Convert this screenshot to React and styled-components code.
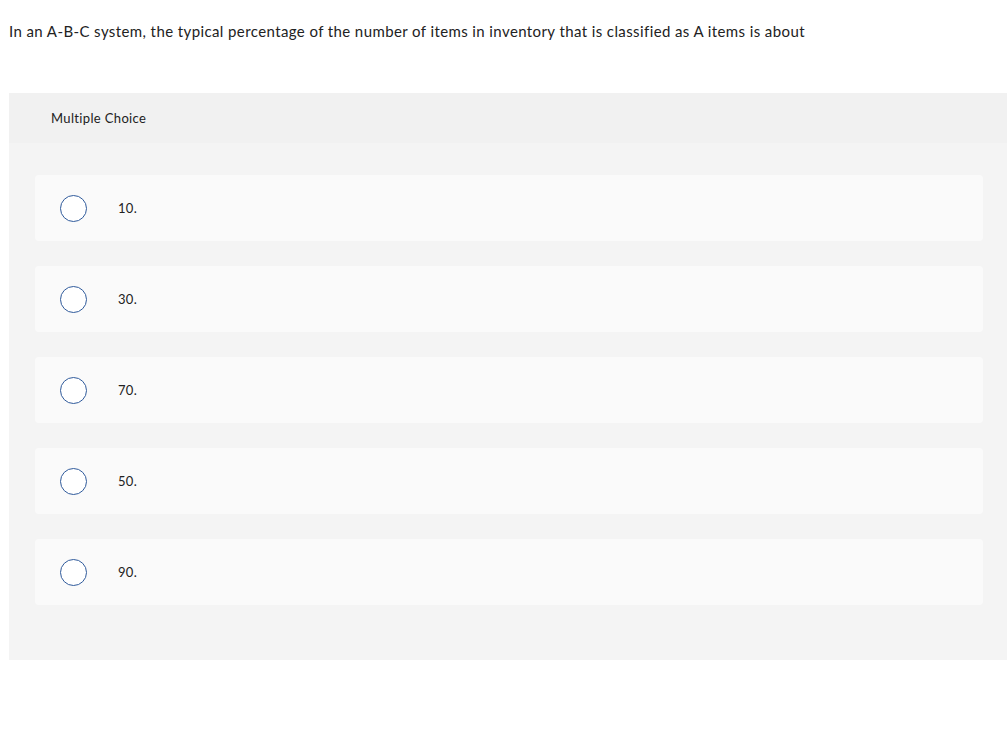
import React from "react";
import styled, { createGlobalStyle } from "styled-components";

const Global = createGlobalStyle`
  html, body { margin: 0; padding: 0; background: #fff; overflow: hidden; }
  body { font-family: "Lato", "Liberation Sans", sans-serif; color: #333; }
`;

const Page = styled.div`
  padding: 21px 0 0 9px;
`;

const Question = styled.p`
  margin: 0;
  font-size: 15px;
  letter-spacing: 0.4px;
  line-height: 20px;
  color: #222;
`;

const Panel = styled.section`
  margin-top: 52px;
  width: 1000px;
  background: #f4f4f4;
  padding-bottom: 55px;
`;

const Header = styled.div`
  height: 50px;
  background: #f1f1f1;
  display: flex;
  align-items: center;
  padding-left: 42px;
  font-size: 13px;
  letter-spacing: 0.35px;
  color: #222;
`;

const Options = styled.div`
  display: flex;
  flex-direction: column;
  gap: 25px;
  padding: 32px 26px 0;
`;

const Option = styled.label`
  height: 66px;
  background: #fafafa;
  border-radius: 4px;
  display: flex;
  align-items: center;
  padding-left: 25px;
  cursor: pointer;
`;

const Radio = styled.span`
  width: 25px;
  height: 25px;
  border-radius: 50%;
  border: 1.5px solid #2f5a9b;
  background: #fff;
  flex: none;
`;

const Label = styled.span`
  margin-left: 31px;
  font-size: 13px;
  letter-spacing: 0.3px;
  color: #222;
`;

const answers = ["10.", "30.", "70.", "50.", "90."];

export default function App() {
  return (
    <>
      <Global />
      <Page>
        <Question>
          In an A-B-C system, the typical percentage of the number of items in inventory that is classified as A items is about
        </Question>
        <Panel>
          <Header>Multiple Choice</Header>
          <Options>
            {answers.map((a) => (
              <Option key={a}>
                <Radio />
                <Label>{a}</Label>
              </Option>
            ))}
          </Options>
        </Panel>
      </Page>
    </>
  );
}
